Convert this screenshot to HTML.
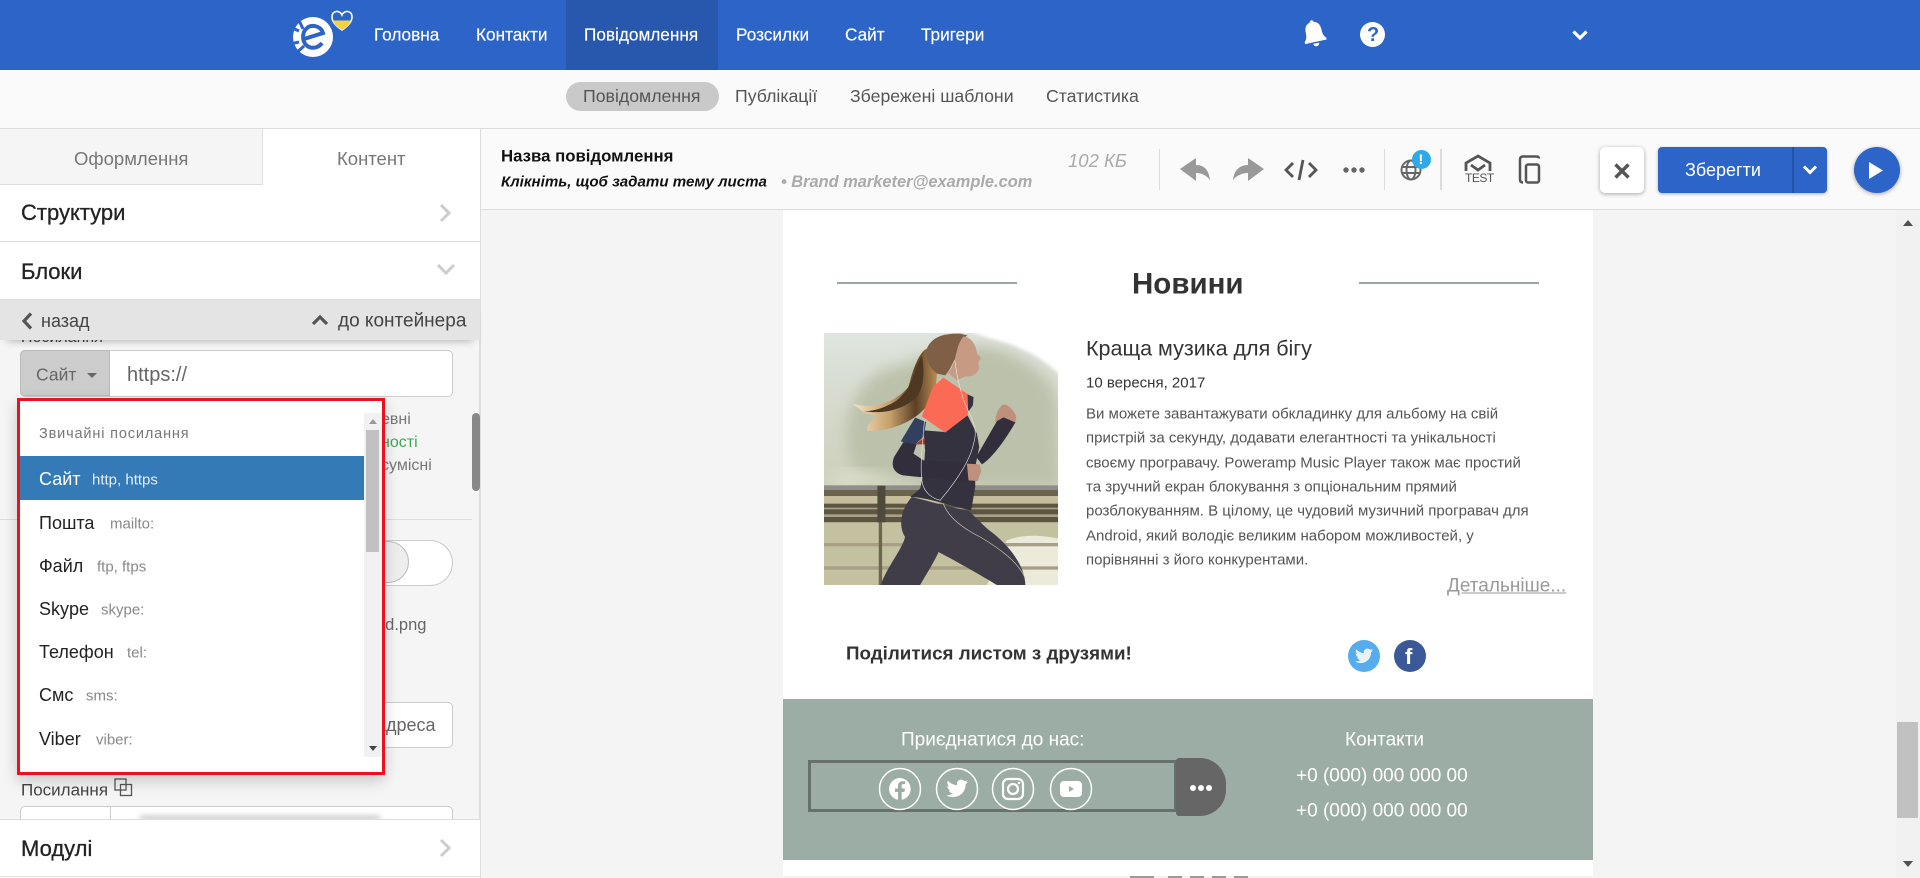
<!DOCTYPE html>
<html lang="uk"><head><meta charset="utf-8"><title>Редактор</title>
<style>
html,body{margin:0;padding:0;width:1920px;height:878px;overflow:hidden;background:#f4f4f4}
body{position:relative;font-family:"Liberation Sans","Noto Sans CJK SC",sans-serif;color:#333}
div,span,svg{position:absolute;display:block}
.t{position:absolute;white-space:nowrap;line-height:1;transform:translateY(calc(-50% + 1px))}
.nav{color:#fff;font-size:17.200px;top:34px;-webkit-text-stroke:.15px #fff}
.sub{color:#555;font-size:17.700px;top:96px}
.it{font-size:18px;color:#222;left:39px;transform:translateY(-50%)}
.mu{font-size:15px;color:#888;transform:translateY(-50%)}
.b{font-size:15px;color:#555;left:1086px}
.w{color:#fff;font-size:19px}
.h{font-size:22px;color:#222;-webkit-text-stroke:.3px #222}
</style></head><body>

<!-- top bar -->
<div style="left:0;top:0;width:1920px;height:70px;background:#2d64c8"></div>
<div style="left:566px;top:0;width:152px;height:70px;background:#2857ae"></div>
<svg style="left:290px;top:8px" width="66" height="52" viewBox="0 0 66 52">
<circle cx="23" cy="29" r="20" fill="#fff"/>
<path d="M14 31 33 25C31 18 22 16 17 20 11 25 12 36 19 39 24 41 29 39 32 35" fill="none" stroke="#2d64c8" stroke-width="4"/>
<path d="M0 19 9 23M0 36 9 34M4 47 14 38M8 10 13 21" fill="none" stroke="#2d64c8" stroke-width="3"/>
<path d="M52 22c-6-4-10-8-10-13 0-7 8-7 10-2 2-5 10-5 10 2 0 5-4 9-10 13Z" fill="#2d64c8" stroke="#fff" stroke-width="1.600"/>
<path d="M42.900 12.500h18.200c-1.400 4-4.400 6.500-9.100 9.500-4.700-3-7.700-5.500-9.100-9.500Z" fill="#f3d33f"/>
</svg>
<span class="t nav" style="left:374px">Головна</span>
<span class="t nav" style="left:476px">Контакти</span>
<span class="t nav" style="left:584px">Повідомлення</span>
<span class="t nav" style="left:736px">Розсилки</span>
<span class="t nav" style="left:845px">Сайт</span>
<span class="t nav" style="left:921px">Тригери</span>
<svg style="left:1301px;top:19px" width="26" height="28" viewBox="0 0 26 28"><g transform="rotate(-12 13 14)" fill="#fff"><path d="M13 1c1 0 2 1 2 2 4 1 6 4 6 9 0 5 1 7 3 9v2H2v-2c2-2 3-4 3-9 0-5 2-8 6-9 0-1 1-2 2-2Z"/><path d="M10 24.500h6a3 3 0 0 1-6 0Z"/></g></svg>
<div style="left:1360px;top:22px;width:25px;height:25px;border-radius:50%;background:#fff"></div>
<span class="t" style="left:1367px;top:34px;font-size:20px;font-weight:bold;color:#2d64c8">?</span>
<svg style="left:1571px;top:29px" width="18" height="12" viewBox="0 0 18 12"><path d="M2.500 2.500 9 9l6.500-6.500" fill="none" stroke="#fff" stroke-width="3.200"/></svg>

<!-- sub nav -->
<div style="left:0;top:70px;width:1920px;height:58px;background:#fafafa;border-bottom:1px solid #ddd"></div>
<div style="left:566px;top:82px;width:153px;height:29px;border-radius:15px;background:#c9c9c9"></div>
<span class="t sub" style="left:583px">Повідомлення</span>
<span class="t sub" style="left:735px">Публікації</span>
<span class="t sub" style="left:850px">Збережені шаблони</span>
<span class="t sub" style="left:1046px">Статистика</span>

<!-- toolbar -->
<div style="left:481px;top:129px;width:1439px;height:80px;background:#fafafa;border-bottom:1px solid #ddd"></div>
<span class="t" style="left:501px;top:156px;font-size:16.800px;font-weight:bold;color:#111">Назва повідомлення</span>
<span class="t" style="left:501px;top:181px;font-size:15.100px;font-weight:bold;font-style:italic;color:#111">Клікніть, щоб задати тему листа</span>
<span class="t" style="left:781px;top:181px;font-size:16.400px;font-weight:bold;font-style:italic;color:#aaa">• Brand marketer@example.com</span>
<span class="t" style="left:1068px;top:160px;font-size:18.500px;font-style:italic;color:#aaa">102 КБ</span>
<div style="left:1159px;top:149px;width:1px;height:41px;background:#ddd"></div>
<div style="left:1384px;top:149px;width:1px;height:41px;background:#ddd"></div>
<div style="left:1440px;top:149px;width:2px;height:41px;background:#ddd"></div>
<svg style="left:1179px;top:156px" width="88" height="30" viewBox="0 0 88 30" fill="#999"><path d="M1 13 17 2v7c9 0 13 6 14 15-3-4-8-7-14-7v8Z"/><path d="M85 13 69 2v7c-9 0-14 6-15 15 3-4 9-7 15-7v8Z"/></svg>
<svg style="left:1284px;top:156px" width="34" height="28" viewBox="0 0 34 28" fill="none" stroke="#555" stroke-width="2.800"><path d="M9 7 2 14l7 7M25 7l7 7-7 7M19 4l-4 20"/></svg>
<svg style="left:1342px;top:165px" width="24" height="10" viewBox="0 0 24 10" fill="#666"><circle cx="4" cy="5" r="2.700"/><circle cx="12" cy="5" r="2.700"/><circle cx="20" cy="5" r="2.700"/></svg>
<svg style="left:1399px;top:158px" width="24" height="24" viewBox="0 0 24 24" fill="none" stroke="#666" stroke-width="1.900"><circle cx="12" cy="12" r="9.500"/><ellipse cx="12" cy="12" rx="4.500" ry="9.500"/><path d="M2.500 9h19M2.500 15h19"/></svg>
<div style="left:1412px;top:150px;width:19px;height:19px;border-radius:50%;background:#2fa9e8"></div>
<span class="t" style="left:1418.500px;top:158px;font-size:14px;font-weight:bold;color:#fff">!</span>
<svg style="left:1463px;top:154px" width="30" height="18" viewBox="0 0 30 18" fill="none" stroke="#555" stroke-width="2.800"><path d="M3 17V9L15 2l12 7v8"/><path d="M8 11l7 5 7-5"/></svg>
<span class="t" style="left:1465px;top:177px;font-size:12px;letter-spacing:-.5px;color:#555">TEST</span>
<svg style="left:1518px;top:155px" width="24" height="29" viewBox="0 0 24 29" fill="none" stroke="#555" stroke-width="2.500"><path d="M21 3.500c0-1-1-2-2-2H5c-2 0-3 1-3 3v20c0 2 1 3 3 3"/><rect x="8" y="9.500" width="13" height="18" rx="2"/></svg>
<div style="left:1600px;top:147px;width:44px;height:46px;background:#fff;border-radius:5px;box-shadow:0 1px 4px rgba(0,0,0,.35)"></div>
<svg style="left:1612px;top:161px" width="20" height="20" viewBox="0 0 20 20"><path d="M3.500 3.500l13 13M16.500 3.500l-13 13" stroke="#555" stroke-width="3.400"/></svg>
<div style="left:1658px;top:147px;width:169px;height:46px;background:#2d64c8;border-radius:4px;box-shadow:0 1px 3px rgba(0,0,0,.3)"></div>
<div style="left:1792px;top:147px;width:2px;height:46px;background:#2453a8"></div>
<span class="t" style="left:1685px;top:169px;font-size:18px;color:#fff">Зберегти</span>
<svg style="left:1802px;top:164px" width="16" height="12" viewBox="0 0 16 12"><path d="M2 2.500l6 6 6-6" fill="none" stroke="#fff" stroke-width="3"/></svg>
<div style="left:1854px;top:147px;width:46px;height:46px;border-radius:50%;background:#2d64c8;box-shadow:0 1px 4px rgba(0,0,0,.35)"></div>
<svg style="left:1869px;top:162px" width="15" height="17" viewBox="0 0 15 17"><path d="M0 0l14 8.500L0 17Z" fill="#fff"/></svg>

<!-- canvas -->
<div style="left:481px;top:210px;width:1415px;height:668px;background:#f4f4f4"></div>
<div style="left:1896px;top:210px;width:24px;height:668px;background:#f1f1f1"></div>
<div style="left:1897px;top:722px;width:21px;height:96px;background:#c1c1c1"></div>
<svg style="left:1901px;top:219px" width="14" height="8"><path d="M7 1l5 6H2Z" fill="#505050"/></svg>
<svg style="left:1901px;top:860px" width="14" height="8"><path d="M7 7 2 1h10Z" fill="#505050"/></svg>

<!-- email -->
<div style="left:783px;top:210px;width:810px;height:666px;background:#fff"></div>
<div style="left:837px;top:282px;width:180px;height:2px;background:#9aa5a5"></div>
<div style="left:1359px;top:282px;width:180px;height:2px;background:#9aa5a5"></div>
<span class="t" style="left:1132px;top:283px;font-size:29.500px;font-weight:bold;color:#333">Новини</span>

<svg style="left:824px;top:333px" width="234" height="252" viewBox="132 278 701 756" preserveAspectRatio="none">
<defs>
<linearGradient id="g" x1="0" y1="0" x2="0" y2="1"><stop offset="0" stop-color="#dfe5df"/><stop offset=".55" stop-color="#ced1bd"/><stop offset="1" stop-color="#c5c4a2"/></linearGradient>
<linearGradient id="h" x1="0" y1="0" x2="1" y2="0"><stop offset="0" stop-color="#f6e6c6"/><stop offset=".45" stop-color="#c7a06a"/><stop offset=".75" stop-color="#5a4026"/><stop offset="1" stop-color="#b98c52"/></linearGradient>
<filter id="bl" x="-20%" y="-20%" width="140%" height="140%"><feGaussianBlur stdDeviation="22"/></filter>
<filter id="bl2"><feGaussianBlur stdDeviation="5"/></filter>
<filter id="s"><feGaussianBlur stdDeviation=".9"/></filter>
<clipPath id="c"><rect x="132" y="278" width="701" height="756"/></clipPath>
</defs>
<g clip-path="url(#c)">
<rect x="132" y="278" width="701" height="756" fill="url(#g)"/>
<path d="M200 620C190 480 260 400 340 380 440 350 560 300 640 320 740 350 833 420 833 500V735H240Z" fill="#bcc1ab" filter="url(#bl)"/>
<path d="M140 720C240 650 280 720 400 720V735H140Z" fill="#dde0cc" filter="url(#bl)"/>
<path d="M570 270H840V405C800 365 760 340 720 325 680 300 620 298 570 270Z" fill="#fff" filter="url(#bl2)"/>
<g filter="url(#s)">
<rect x="132" y="735" width="701" height="14" fill="#8e8f8a"/>
<rect x="132" y="749" width="701" height="18" fill="#6b6450"/>
<rect x="132" y="767" width="701" height="23" fill="#c5bd9c"/>
<rect x="132" y="790" width="701" height="56" fill="#5b5443"/>
<g fill="#a89f85"><rect x="132" y="802" width="701" height="5"/><rect x="132" y="822" width="701" height="8"/></g>
<rect x="132" y="846" width="701" height="188" fill="#c4c1a0"/>
<path d="M680 900c50-20 110-15 153-5v139H620Z" fill="#eceadb"/>
<rect x="132" y="908" width="701" height="10" fill="#a99f85"/>
<rect x="132" y="978" width="701" height="10" fill="#a99f85"/>
<rect x="292" y="736" width="24" height="110" fill="#4e493c"/><rect x="296" y="846" width="10" height="188" fill="#6d6550"/>
<!-- hair -->
<path d="M440 325C415 335 395 400 385 440 350 480 290 510 215 490 250 510 240 520 295 525 265 545 260 560 262 572 330 575 420 540 450 480 470 440 470 410 470 400Z" fill="url(#h)"/>
<path d="M425 345C400 390 400 440 350 480 320 500 280 515 250 512 320 525 380 500 410 470 430 440 435 400 425 345Z" fill="#4f3822"/>
<path d="M440 325C455 290 490 278 540 280L562 285C540 300 530 330 525 355 515 370 510 390 495 405L470 400C445 380 435 350 440 325Z" fill="#7f6146"/>
<!-- face -->
<path d="M550 288C575 290 590 320 590 340L602 352 595 365 596 385C590 405 570 410 555 408L530 420 505 398C515 385 520 370 525 355 530 330 535 305 550 288Z" fill="#c79a84"/>
<!-- legs -->
<path d="M395 770C360 810 355 860 375 890 365 930 320 980 302 1034H420C440 1000 470 950 475 935 560 980 610 1010 650 1034H735C735 980 690 920 640 880 600 850 570 810 560 810 500 800 440 780 395 770Z" fill="#403d49"/>
<path d="M484 768C490 820 540 860 600 890 650 920 710 960 733 1010" fill="none" stroke="#cfc6b4" stroke-width="2"/>
<!-- torso -->
<path d="M495 575 562 525 590 580 597 620 585 680 585 740 573 810C520 800 440 770 390 770L420 745 430 700 435 630 430 570Z" fill="#34323f"/>
<path d="M370 605 342 650C330 680 345 700 370 705L560 725 598 695 565 665 430 660 400 640 410 610Z" fill="#312f3b"/>
<path d="M588 650 660 525 706 545C680 590 640 650 605 672Z" fill="#312f3b"/>
<path d="M645 545c0-25 15-50 25-52 15-3 35 25 38 35l-3 18-35-15Z" fill="#bf917c"/>
<path d="M560 670l38 2 5 20-10 30-28-2Z" fill="#bf917c"/>
<!-- orange -->
<path d="M490 412 568 465 562 525 495 577 425 528 458 440Z" fill="#fb6a54"/>
<path d="M562 462l18 8-2 25-14 20Z" fill="#34323f"/>
<path d="M362 603 405 532 438 545 430 590 405 612Z" fill="#33405e"/>
<path d="M405 612l30-22-2 22Z" fill="#a5382c"/>
<path d="M524 360c5 40 10 70 30 130M555 490c20 50 40 70 25 120-10 50-50 110-100 170-20-5-50-20-55-60-5-40 0-90 8-180" fill="none" stroke="#efeae2" stroke-width="1.800"/>
</g>
</g>
</svg>

<span class="t" style="left:1086px;top:348px;font-size:21.500px;color:#333">Краща музика для бігу</span>
<span class="t" style="left:1086px;top:382px;font-size:15px;color:#333">10 вересня, 2017</span>
<span class="t b" style="top:413px">Ви можете завантажувати обкладинку для альбому на свій</span>
<span class="t b" style="top:437px">пристрій за секунду, додавати елегантності та унікальності</span>
<span class="t b" style="top:462px">своєму програвачу. Poweramp Music Player також має простий</span>
<span class="t b" style="top:486px">та зручний екран блокування з опціональним прямий</span>
<span class="t b" style="top:510px">розблокуванням. В цілому, це чудовий музичний програвач для</span>
<span class="t b" style="top:535px">Android, який володіє великим набором можливостей, у</span>
<span class="t b" style="top:559px">порівнянні з його конкурентами.</span>
<span class="t" style="left:1447px;top:585px;font-size:19px;color:#999;text-decoration:underline">Детальніше...</span>
<span class="t" style="left:846px;top:653px;font-size:18.800px;font-weight:bold;color:#333">Поділитися листом з друзями!</span>
<div style="left:1348px;top:640px;width:32px;height:32px;border-radius:50%;background:#55acee"></div>
<svg style="left:1355px;top:648px" width="18" height="16" viewBox="0 0 24 20"><path d="M24 2.400c-.9.400-1.800.7-2.800.8 1-.6 1.800-1.600 2.200-2.700-1 .6-2 1-3.100 1.200A4.900 4.900 0 0 0 11.900 6.200C7.800 6 4.100 4 1.700.9c-1.300 2.200-.7 5.100 1.500 6.600-.8 0-1.600-.2-2.200-.6 0 2.400 1.700 4.400 3.900 4.900-.7.200-1.500.2-2.200.1.600 2 2.400 3.400 4.600 3.400A9.900 9.900 0 0 1 0 17.300 14 14 0 0 0 21.500 5c1-.7 1.800-1.600 2.500-2.600Z" fill="#e8f2f2"/></svg>
<div style="left:1394px;top:640px;width:32px;height:32px;border-radius:50%;background:#3b5998"></div>
<span class="t" style="left:1405px;top:656px;font-size:22px;font-weight:bold;color:#fff">f</span>

<!-- footer -->
<div style="left:783px;top:699px;width:810px;height:161px;background:#9cada5"></div>
<span class="t w" style="left:901px;top:739px">Приєднатися до нас:</span>
<div style="left:808px;top:760px;width:363px;height:46px;border:3px solid #677069"></div>
<div style="left:1176px;top:758px;width:50px;height:58px;background:#666;border-radius:3px 26px 26px 3px"></div>
<svg style="left:1188px;top:781px" width="26" height="14" fill="#fff"><circle cx="5" cy="7" r="3"/><circle cx="13" cy="7" r="3"/><circle cx="21" cy="7" r="3"/></svg>
<svg style="left:878px;top:767px" width="216" height="44" viewBox="0 0 216 44" fill="none" stroke="#fff" stroke-width="1.500">
<circle cx="22" cy="22" r="20.500"/><circle cx="79" cy="22" r="20.500"/><circle cx="135" cy="22" r="20.500"/><circle cx="193" cy="22" r="20.500"/>
<path fill="#fff" stroke="none" d="M22 11a11 11 0 0 0-2 21.800V25h-3v-3.500h3v-2.500c0-3 1.800-4.700 4.500-4.700h2.700V17h-1.700c-1.300 0-1.800.8-1.800 1.800v2.700h3.300l-.6 3.500h-2.700v7.800A11 11 0 0 0 22 11Z"/>
<path fill="#fff" stroke="none" d="M90 14.800c-.8.400-1.600.6-2.500.7.900-.5 1.600-1.400 1.900-2.400-.8.500-1.800.9-2.800 1.100A4.400 4.400 0 0 0 79 18.200c-3.600-.2-6.900-1.900-9-4.600-1.200 2-.6 4.600 1.300 5.900-.7 0-1.400-.2-2-.5 0 2.100 1.500 3.900 3.500 4.300-.6.200-1.300.2-2 .1.600 1.800 2.200 3 4.100 3a8.800 8.800 0 0 1-6.500 1.800 12.500 12.500 0 0 0 19.200-11c.9-.6 1.700-1.400 2.400-2.400Z"/>
<rect x="125" y="12" width="20" height="20" rx="5" stroke-width="2.200"/><circle cx="135" cy="22" r="5" stroke-width="2.200"/><circle cx="141" cy="16" r="1.200" fill="#fff" stroke="none"/>
<path fill="#fff" stroke="none" fill-rule="evenodd" d="M186 14h14a4 4 0 0 1 4 4v8a4 4 0 0 1-4 4h-14a4 4 0 0 1-4-4v-8a4 4 0 0 1 4-4Zm5 5v6l5-3Z"/>
</svg>
<span class="t w" style="left:1345px;top:739px">Контакти</span>
<span class="t w" style="left:1296px;top:775px">+0 (000) 000 000 00</span>
<span class="t w" style="left:1296px;top:810px">+0 (000) 000 000 00</span>
<div style="left:1130px;top:876px;width:24px;height:2px;background:#999"></div>
<div style="left:1168px;top:876px;width:14px;height:2px;background:#999"></div>
<div style="left:1190px;top:876px;width:14px;height:2px;background:#999"></div>
<div style="left:1212px;top:876px;width:14px;height:2px;background:#999"></div>
<div style="left:1234px;top:876px;width:14px;height:2px;background:#999"></div>

<!-- left panel -->
<div style="left:0;top:129px;width:480px;height:749px;background:#fff;border-right:1px solid #ddd"></div>
<div style="left:0;top:129px;width:262px;height:55px;background:#f5f5f5;border-right:1px solid #e0e0e0;border-bottom:1px solid #ddd"></div>
<span class="t" style="left:74px;top:158px;font-size:18.500px;color:#777">Оформлення</span>
<span class="t" style="left:337px;top:158px;font-size:18.500px;color:#777">Контент</span>
<span class="t h" style="left:21px;top:212px">Структури</span>
<svg style="left:438px;top:203px" width="14" height="20"><path d="M3 2l8 8-8 8" fill="none" stroke="#ccc" stroke-width="3"/></svg>
<div style="left:0;top:241px;width:480px;height:1px;background:#ddd"></div>
<span class="t h" style="left:21px;top:271px">Блоки</span>
<svg style="left:436px;top:262px" width="20" height="14"><path d="M2 3l8 8 8-8" fill="none" stroke="#ccc" stroke-width="3"/></svg>

<div style="left:0;top:340px;width:480px;height:479px;background:#f5f5f5;overflow:hidden;border-right:1px solid #ddd;box-sizing:border-box"></div>
<div style="left:0;top:299px;width:480px;height:1px;background:#ddd"></div>
<span class="t" style="left:21px;top:337px;font-size:16px;color:#444">Посилання</span>
<div style="left:0;top:300px;width:480px;height:40px;background:#e4e4e4;box-shadow:0 7px 9px -7px rgba(0,0,0,.35)"></div>
<svg style="left:20px;top:311px" width="14" height="20"><path d="M11 2.500 4 10l7 7.500" fill="none" stroke="#555" stroke-width="3.200"/></svg>
<span class="t" style="left:41px;top:320px;font-size:18px;color:#444">назад</span>
<svg style="left:311px;top:313px" width="18" height="14"><path d="M2 11l7-7 7 7" fill="none" stroke="#555" stroke-width="3.200"/></svg>
<span class="t" style="left:338px;top:320px;font-size:19px;color:#444">до контейнера</span>

<div style="left:20px;top:350px;width:431px;height:45px;background:#fff;border:1px solid #ccc;border-radius:5px"></div>
<div style="left:20px;top:350px;width:90px;height:46px;background:#ccc;border-radius:5px 0 0 5px;box-shadow:inset 0 0 0 1px #bbb"></div>
<span class="t" style="left:36px;top:374px;font-size:17.500px;color:#666">Сайт</span>
<svg style="left:86px;top:372px" width="12" height="7"><path d="M1 1h10L6 6Z" fill="#666"/></svg>
<span class="t" style="left:127px;top:374px;font-size:20px;color:#666">https://</span>

<span class="t" style="left:381px;top:419px;font-size:16px;color:#777">евні</span>
<span class="t" style="left:381px;top:442px;font-size:16px;color:#3faa55">ності</span>
<span class="t" style="left:381px;top:465px;font-size:16px;color:#777">сумісні</span>
<div style="left:0;top:519px;width:472px;height:1px;background:#ddd"></div>
<div style="left:360px;top:540px;width:91px;height:44px;background:#fff;border:1px solid #ccc;border-radius:23px"></div>
<div style="left:367px;top:541px;width:42px;height:42px;background:#eee;border:1px solid #bbb;border-radius:50%;box-sizing:border-box"></div>
<span class="t" style="left:376px;top:624px;font-size:16.500px;color:#666">ed.png</span>
<div style="left:370px;top:702px;width:81px;height:44px;background:#fff;border:1px solid #ccc;border-radius:5px"></div>
<span class="t" style="left:376px;top:724px;font-size:18px;color:#666">адреса</span>
<div style="left:472px;top:413px;width:8px;height:78px;background:#888;border-radius:4px"></div>

<span class="t" style="left:21px;top:789px;font-size:17px;color:#444">Посилання</span>
<svg style="left:114px;top:778px" width="19" height="19" fill="none" stroke="#555" stroke-width="1.300"><rect x="1" y="1" width="11" height="11"/><rect x="6.500" y="6.500" width="11" height="11"/></svg>
<div style="left:20px;top:806px;width:431px;height:30px;background:#fff;border:1px solid #ccc;border-radius:5px"></div>
<div style="left:110px;top:806px;width:1px;height:14px;background:#ccc"></div>
<div style="left:140px;top:816px;width:240px;height:4px;background:#bbb;filter:blur(3px)"></div>

<div style="left:0;top:819px;width:480px;height:58px;background:#fff;border-top:1px solid #ddd;border-bottom:1px solid #ddd;box-sizing:border-box"></div>
<span class="t h" style="left:21px;top:848px">Модулі</span>
<svg style="left:438px;top:838px" width="14" height="20"><path d="M3 2l8 8-8 8" fill="none" stroke="#ccc" stroke-width="3"/></svg>

<!-- dropdown -->
<div style="left:17px;top:398px;width:362px;height:371px;background:#fff;border:3px solid #e8131f;box-shadow:0 6px 14px rgba(0,0,0,.18)"></div>
<div style="left:364px;top:413px;width:18px;height:344px;background:#f1f1f1"></div>
<div style="left:366px;top:430px;width:13px;height:122px;background:#c1c1c1"></div>
<svg style="left:368px;top:418px" width="10" height="7"><path d="M5 1l4 5H1Z" fill="#999"/></svg>
<svg style="left:368px;top:745px" width="10" height="7"><path d="M5 6 1 1h8Z" fill="#444"/></svg>
<span class="t" style="left:39px;top:433px;font-size:14.500px;color:#777;letter-spacing:.85px">Звичайні посилання</span>
<div style="left:20px;top:456px;width:344px;height:44px;background:#337ab7"></div>
<span class="t it" style="top:479px;color:#fff">Сайт</span><span class="t mu" style="left:92px;top:480px;color:#e6eef5">http, https</span>
<span class="t it" style="top:523px">Пошта</span><span class="t mu" style="left:110px;top:524px">mailto:</span>
<span class="t it" style="top:566px">Файл</span><span class="t mu" style="left:97px;top:567px">ftp, ftps</span>
<span class="t it" style="top:609px">Skype</span><span class="t mu" style="left:101px;top:610px">skype:</span>
<span class="t it" style="top:652px">Телефон</span><span class="t mu" style="left:127px;top:653px">tel:</span>
<span class="t it" style="top:695px">Смс</span><span class="t mu" style="left:86px;top:696px">sms:</span>
<span class="t it" style="top:739px">Viber</span><span class="t mu" style="left:96px;top:740px">viber:</span>
</body></html>
